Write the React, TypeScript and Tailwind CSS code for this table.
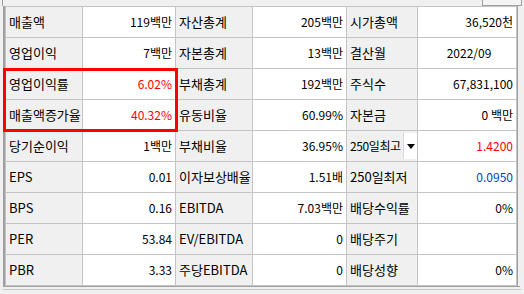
import React from "react";

type Cell = { label: string; value: string; color?: string; center?: boolean; dropdown?: boolean };

const rows: Cell[][] = [
  [
    { label: "매출액", value: "119백만" },
    { label: "자산총계", value: "205백만" },
    { label: "시가총액", value: "36,520천" },
  ],
  [
    { label: "영업이익", value: "7백만" },
    { label: "자본총계", value: "13백만" },
    { label: "결산월", value: "2022/09", center: true },
  ],
  [
    { label: "영업이익률", value: "6.02%", color: "text-[#ff0000]" },
    { label: "부채총계", value: "192백만" },
    { label: "주식수", value: "67,831,100" },
  ],
  [
    { label: "매출액증가율", value: "40.32%", color: "text-[#ff0000]" },
    { label: "유동비율", value: "60.99%" },
    { label: "자본금", value: "0 백만" },
  ],
  [
    { label: "당기순이익", value: "1백만" },
    { label: "부채비율", value: "36.95%" },
    { label: "250일최고", value: "1.4200", color: "text-[#ff0000]", dropdown: true },
  ],
  [
    { label: "EPS", value: "0.01" },
    { label: "이자보상배율", value: "1.51배" },
    { label: "250일최저", value: "0.0950", color: "text-[#0041c8]" },
  ],
  [
    { label: "BPS", value: "0.16" },
    { label: "EBITDA", value: "7.03백만" },
    { label: "배당수익률", value: "0%" },
  ],
  [
    { label: "PER", value: "53.84" },
    { label: "EV/EBITDA", value: "0" },
    { label: "배당주기", value: "" },
  ],
  [
    { label: "PBR", value: "3.33" },
    { label: "주당EBITDA", value: "0" },
    { label: "배당성향", value: "0%" },
  ],
];

const App: React.FC = () => {
  return (
    <div
      className="w-[524px] h-[294px] bg-[#f0f0f0] overflow-hidden relative text-[12px] text-black"
      style={{ fontFamily: '"Noto Sans CJK KR", "Noto Sans", sans-serif' }}
    >
      {/* top strip */}
      <div className="h-[6px] flex">
        <div className="w-[3px] border-r border-[#a0a0a0]"></div>
        <div className="flex-1"></div>
        <div className="w-[40px] mr-[2px] border-x border-b border-[#a0a0a0] bg-[#f4f4f4]"></div>
      </div>
      <div className="ml-[3px] mr-[4px] border-l-2 border-b border-[#a0a0a0] flex">
        <div className="flex flex-col w-[512px] border-t border-l border-[#c4c4c4] bg-white">
          {rows.map((row, i) => (
            <div key={i} className="flex h-[31px] border-b border-[#c4c4c4]">
              {row.map((c, j) => (
                <React.Fragment key={j}>
                  <div
                    className={`relative flex items-center pl-[3px] bg-[#f0f0f0] border-r border-[#c4c4c4] whitespace-nowrap ${
                      c.dropdown ? "text-[12px] tracking-[-0.4px]" : "text-[13px]"
                    } ${j === 0 ? "w-[77px]" : j === 1 ? "w-[77px]" : "w-[71px]"}`}
                  >
                    {c.label}
                    {c.dropdown && (
                      <div className="absolute right-0 top-[2px] bottom-[2px] w-[14px] bg-white border-l border-[#d8d8d8] flex items-center justify-center">
                        <svg width="8" height="5" viewBox="0 0 8 5">
                          <path d="M0 0h8L4 5z" fill="#000" />
                        </svg>
                      </div>
                    )}
                  </div>
                  <div
                    className={`flex items-center border-r border-[#c4c4c4] whitespace-nowrap ${
                      c.center ? "justify-center pl-[4px]" : "justify-end pr-[3px]"
                    } ${c.color ?? ""} ${j === 0 ? "w-[93px]" : j === 1 ? "w-[94px]" : "w-[99px]"}`}
                  >
                    {c.value}
                  </div>
                </React.Fragment>
              ))}
            </div>
          ))}
        </div>
        <div className="flex-1 border-l border-[#a0a0a0] bg-[#f0f0f0]"></div>
      </div>
      <div className="mx-[3px] mt-[2px] h-[1px] bg-[#c8c8c8]"></div>
      {/* red highlight box */}
      <div className="absolute left-[3px] top-[68px] w-[175px] h-[64px] border-[3px] border-[#ff0000]"></div>
    </div>
  );
};

export default App;
